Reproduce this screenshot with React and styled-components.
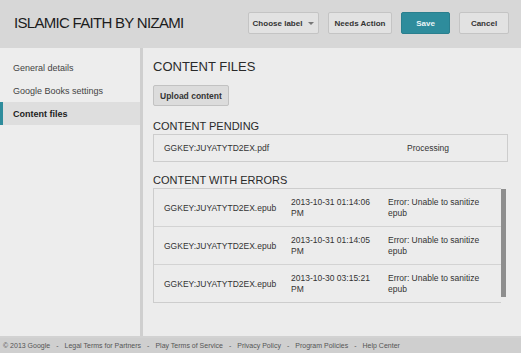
import React from "react";
import styled, { createGlobalStyle } from "styled-components";

const GlobalStyle = createGlobalStyle`
  html, body {
    margin: 0;
    padding: 0;
    background: #ebebeb;
    font-family: "Liberation Sans", Arial, sans-serif;
    color: #222;
  }
`;

const errors = [
  { file: "GGKEY:JUYATYTD2EX.epub", date: "2013-10-31 01:14:06 PM" },
  { file: "GGKEY:JUYATYTD2EX.epub", date: "2013-10-31 01:14:05 PM" },
  { file: "GGKEY:JUYATYTD2EX.epub", date: "2013-10-30 03:15:21 PM" },
];

const footerLinks = [
  "© 2013 Google",
  "Legal Terms for Partners",
  "Play Terms of Service",
  "Privacy Policy",
  "Program Policies",
  "Help Center",
];

function App() {
  return (
    <Page>
      <GlobalStyle />
      <Header>
        <Title>ISLAMIC FAITH BY NIZAMI</Title>
        <Actions>
          <Button w={71}>
            Choose label <Caret />
          </Button>
          <Button w={64}>Needs Action</Button>
          <Button w={49} primary>
            Save
          </Button>
          <Button w={50}>Cancel</Button>
        </Actions>
      </Header>
      <Body>
        <Sidebar>
          <NavItem>General details</NavItem>
          <NavItem>Google Books settings</NavItem>
          <NavItem active>Content files</NavItem>
        </Sidebar>
        <Main>
          <Heading>CONTENT FILES</Heading>
          <UploadButton>Upload content</UploadButton>
          <SubHeading>CONTENT PENDING</SubHeading>
          <PendingBox>
            <span>GGKEY:JUYATYTD2EX.pdf</span>
            <Status>Processing</Status>
          </PendingBox>
          <SubHeading>CONTENT WITH ERRORS</SubHeading>
          <ErrorWrap>
            <ErrorTable>
              {errors.map((e, i) => (
                <ErrorRow key={i}>
                  <span>{e.file}</span>
                  <WrapCell>{e.date}</WrapCell>
                  <WrapCell>Error: Unable to sanitize epub</WrapCell>
                </ErrorRow>
              ))}
            </ErrorTable>
            <Scrollbar />
          </ErrorWrap>
        </Main>
      </Body>
      <Footer>
        {footerLinks.map((l, i) => (
          <React.Fragment key={l}>
            {i > 0 && <Sep>-</Sep>}
            <span>{l}</span>
          </React.Fragment>
        ))}
      </Footer>
    </Page>
  );
}

export default App;

const Page = styled.div`
  width: 521px;
  height: 353px;
  display: flex;
  flex-direction: column;
  overflow: hidden;
`;

const Header = styled.div`
  height: 48px;
  flex-shrink: 0;
  background: #d7d7d7;
  display: flex;
  align-items: center;
  justify-content: space-between;
  padding: 0 13px 0 14px;
  box-sizing: border-box;
`;

const Title = styled.h1`
  margin: 0;
  font-size: 15px;
  font-weight: normal;
  color: #1c1c1c;
  white-space: nowrap;
  letter-spacing: -0.7px;
  padding-bottom: 3px;
`;

const Actions = styled.div`
  display: flex;
  gap: 9px;
  padding-bottom: 2px;
  margin-right: -1px;
`;

const Button = styled.button`
  height: 22px;
  width: ${(p) => p.w}px;
  padding: 0;
  white-space: nowrap;
  font-family: "Liberation Sans", Arial, sans-serif;
  font-size: 8px;
  font-weight: bold;
  color: ${(p) => (p.primary ? "#eaf4f6" : "#333")};
  background: ${(p) => (p.primary ? "#2e8c9c" : "#e2e2e2")};
  border: 1px solid ${(p) => (p.primary ? "#2a7f8e" : "#c4c4c4")};
  border-radius: 2px;
  display: flex;
  align-items: center;
  justify-content: center;
  gap: 6px;
`;

const Caret = styled.span`
  width: 0;
  height: 0;
  border-left: 3px solid transparent;
  border-right: 3px solid transparent;
  border-top: 3px solid #777;
`;

const Body = styled.div`
  flex: 1;
  display: flex;
  min-height: 0;
  border-bottom: 2px solid #d2d2d2;
`;

const Sidebar = styled.div`
  width: 140px;
  flex-shrink: 0;
  background: #ededed;
  border-right: 3px solid #cfcfcf;
  padding-top: 8px;
`;

const NavItem = styled.div`
  height: 23px;
  display: flex;
  align-items: center;
  padding-left: 10px;
  font-size: 9px;
  white-space: nowrap;
  font-weight: ${(p) => (p.active ? "bold" : "normal")};
  color: ${(p) => (p.active ? "#222" : "#444")};
  background: ${(p) => (p.active ? "#dedede" : "transparent")};
  border-left: 3px solid ${(p) => (p.active ? "#2e8c9c" : "transparent")};
`;

const Main = styled.div`
  flex: 1;
  background: #ececec;
  padding: 11px 13px 0 10px;
  display: flex;
  flex-direction: column;
  align-items: flex-start;
`;

const Heading = styled.h2`
  margin: 0;
  font-size: 13px;
  font-weight: normal;
  color: #2a2a2a;
  line-height: 16px;
`;

const UploadButton = styled.button`
  margin-top: 10px;
  height: 21px;
  padding: 0 6px;
  font-family: "Liberation Sans", Arial, sans-serif;
  font-size: 8.5px;
  font-weight: bold;
  color: #333;
  background: #dcdcdc;
  border: 1px solid #c2c2c2;
  border-radius: 2px;
`;

const SubHeading = styled.h3`
  margin: 13px 0 0;
  font-size: 11px;
  font-weight: normal;
  color: #2a2a2a;
  line-height: 14px;
  & + div {
    margin-top: 1px;
  }
`;

const PendingBox = styled.div`
  align-self: stretch;
  height: 26px;
  border: 1px solid #cdcdcd;
  display: flex;
  align-items: center;
  padding-left: 10px;
  font-size: 8.5px;
  color: #333;
  margin-bottom: -2px;
`;

const Status = styled.span`
  margin-left: auto;
  width: 100px;
`;

const ErrorWrap = styled.div`
  align-self: stretch;
  display: flex;
  margin-right: 2px;
`;

const ErrorTable = styled.div`
  flex: 1;
  border: 1px solid #cdcdcd;
  border-right: none;
`;

const ErrorRow = styled.div`
  height: 37px;
  display: grid;
  grid-template-columns: 127px 97px 1fr;
  align-items: center;
  padding-left: 10px;
  font-size: 8.5px;
  color: #333;
  border-top: 1px solid #d3d3d3;
  &:first-child {
    border-top: none;
  }
`;

const WrapCell = styled.span`
  line-height: 11px;
  padding-right: 10px;
`;

const Scrollbar = styled.div`
  width: 5px;
  background: #8e8e8e;
  margin-top: 1px;
  height: 108px;
`;

const Footer = styled.div`
  height: 15px;
  flex-shrink: 0;
  background: #cfcfcf;
  display: flex;
  align-items: center;
  padding-left: 3px;
  font-size: 7px;
  color: #555;
  gap: 5px;
`;

const Sep = styled.span`
  padding: 0 1px;
`;
